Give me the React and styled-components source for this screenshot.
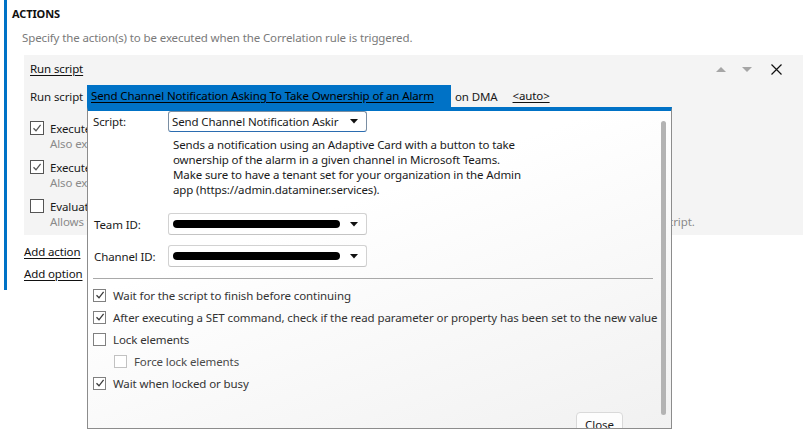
import React from "react";
import styled, { createGlobalStyle } from "styled-components";

const Global = createGlobalStyle`
  html, body { margin: 0; padding: 0; background: #ffffff; }
  body { font-family: "Noto Sans", "Open Sans", sans-serif; font-size: 11.5px; letter-spacing: -0.12px; color: #1a1a1a; overflow: hidden; }
  * { box-sizing: border-box; }
`;

const Page = styled.div`
  width: 803px;
  height: 434px;
  position: relative;
  overflow: hidden;
`;

const Section = styled.section`
  margin-left: 4px;
  border-left: 3px solid #0072c6;
  padding: 5px 0 7px 5px;
  display: flex;
  flex-direction: column;
  align-items: flex-start;
`;

const Title = styled.div`
  font-weight: 700;
  font-size: 11px;
  line-height: 18px;
  color: #111;
`;

const Hint = styled.div`
  margin: 6px 0 0 10px;
  line-height: 18px;
  color: #7a7a7a;
`;

const Card = styled.div`
  align-self: stretch;
  margin: 8px 0 0 12px;
  background: #f4f4f4;
  padding: 4px 11px 5px 6px;
  display: flex;
  flex-direction: column;
`;

const HeaderRow = styled.div`
  height: 20px;
  display: flex;
  align-items: center;
  justify-content: space-between;
`;

const Link = styled.a`
  color: #111;
  text-decoration: underline;
  text-underline-offset: 2px;
  cursor: pointer;
  line-height: 18px;
  margin-top: ${(p) => p.$mt || 0}px;
  margin-left: ${(p) => p.$ml || 0}px;
`;

const Controls = styled.div`
  display: flex;
  align-items: center;
`;

const IconBtn = styled.span`
  display: inline-flex;
  width: ${(p) => p.$w}px;
  justify-content: center;
  align-items: center;
`;

const ScriptRow = styled.div`
  margin-top: 6px;
  height: 22px;
  display: flex;
  align-items: center;
`;

const RowLabel = styled.span`
  width: 57px;
`;

const Selected = styled.div`
  position: relative;
  width: 364px;
  height: 22px;
  background: #0072c6;
  padding: 0 4px;
  display: flex;
  align-items: center;
  white-space: nowrap;
  a {
    color: #000;
  }
`;

const OnDma = styled.span`
  margin-left: 4px;
  margin-right: 15px;
`;

const Options = styled.div`
  margin-top: 13px;
  display: flex;
  flex-direction: column;
  gap: 7px;
`;

const OptionItem = styled.div`
  display: flex;
  flex-direction: column;
`;

const OptionTitle = styled.div`
  height: 16px;
  display: flex;
  align-items: center;
  gap: 6px;
  white-space: nowrap;
`;

const OptionDesc = styled.div`
  height: 16px;
  line-height: 16px;
  padding-left: 20px;
  color: #8a8a8a;
  white-space: nowrap;
`;

const Box = styled.span`
  width: ${(p) => p.$size}px;
  height: ${(p) => p.$size}px;
  flex: none;
  border: 1px solid ${(p) => p.$border};
  background: #fff;
  display: inline-flex;
  align-items: center;
  justify-content: center;
`;

const Popup = styled.div`
  position: absolute;
  left: 0;
  top: 100%;
  width: 585px;
  height: 322px;
  border: 1px solid #8c8c8c;
  border-top: 4px solid #0072c6;
  background: linear-gradient(160deg, #ffffff 35%, #f1f1f1 100%);
  padding: 0 18px 0 4px;
  overflow: hidden;
  z-index: 5;
  color: #1a1a1a;
`;

const Scrollbar = styled.div`
  position: absolute;
  right: 5px;
  top: 10px;
  bottom: 13px;
  width: 5px;
  border-radius: 3px;
  background: #b3b3b3;
`;

const FieldGrid = styled.div`
  display: grid;
  grid-template-columns: 76px 200px;
  align-items: center;
`;

const FieldLabel = styled.span`
  padding-left: ${(p) => p.$pl || 0}px;
  margin-top: ${(p) => p.$mt || 0}px;
`;

const Dropdown = styled.div`
  height: ${(p) => p.$h}px;
  margin-top: ${(p) => p.$mt || 0}px;
  width: ${(p) => p.$w}px;
  border: 1px solid ${(p) => (p.$focus ? "#7a8ea3" : "#d2d2d2")};
  border-bottom-color: ${(p) => (p.$focus ? "#2b6cb0" : "#c4c4c4")};
  border-radius: 3px;
  background: #fff;
  display: flex;
  align-items: center;
  padding: 0 8px 0 3px;
  gap: 6px;
  white-space: nowrap;
  overflow: hidden;
`;

const DropText = styled.span`
  flex: 1;
  overflow: hidden;
`;

const Redacted = styled.span`
  flex: 1;
  height: 8px;
  border-radius: 5px;
  background: #000;
  margin: 0 4px 0 1px;
`;

const Description = styled.div`
  grid-column: 2 / 3;
  margin: 5px 0 0 5px;
  line-height: 15px;
  white-space: nowrap;
`;

const Separator = styled.hr`
  margin: 11px 0 0 1px;
  border: none;
  border-top: 1px solid #a9a9a9;
`;

const Checks = styled.div`
  margin-top: 5px;
  display: flex;
  flex-direction: column;
`;

const CheckRow = styled.div`
  height: 22px;
  display: flex;
  align-items: center;
  gap: 7px;
  padding-left: ${(p) => (p.$indent ? 22 : 1)}px;
  color: ${(p) => (p.$muted ? "#4a4a4a" : "#333")};
  font-size: 11.5px;
  letter-spacing: -0.1px;
  white-space: nowrap;
`;

const Footer = styled.div`
  margin-top: 18px;
  display: flex;
  justify-content: flex-end;
  padding-right: 30px;
`;

const CloseButton = styled.button`
  width: 47px;
  height: 24px;
  border: 1px solid #d9d9d9;
  border-radius: 4px;
  background: #fdfdfd;
  font-family: inherit;
  font-size: 11.5px;
  color: #1a1a1a;
  padding: 0;
`;

const Check = ({ color = "#444" }) => (
  <svg width="10" height="10" viewBox="0 0 10 10">
    <path d="M1.5 5.2 L4 7.8 L8.6 1.8" fill="none" stroke={color} strokeWidth="1.3" />
  </svg>
);

const Caret = () => (
  <svg width="8" height="5" viewBox="0 0 8 5">
    <path d="M0 0 H8 L4 4.5 Z" fill="#111" />
  </svg>
);

const CardOption = ({ checked, title, desc }) => (
  <OptionItem>
    <OptionTitle>
      <Box $size={14} $border="#555">{checked && <Check color="#555" />}</Box>
      <span>{title}</span>
    </OptionTitle>
    <OptionDesc>{desc}</OptionDesc>
  </OptionItem>
);

const PopupCheck = ({ checked, label, indent, disabled }) => (
  <CheckRow $indent={indent} $muted={disabled}>
    <Box $size={13} $border={disabled ? "#c2c2c2" : "#808080"}>{checked && <Check color="#3a3a3a" />}</Box>
    <span>{label}</span>
  </CheckRow>
);

export default function App() {
  return (
    <Page>
      <Global />
      <Section>
        <Title>ACTIONS</Title>
        <Hint>Specify the action(s) to be executed when the Correlation rule is triggered.</Hint>
        <Card>
          <HeaderRow>
            <Link>Run script</Link>
            <Controls>
              <IconBtn $w={26}>
                <svg width="10" height="5" viewBox="0 0 10 5"><path d="M0 5 L5 0 L10 5 Z" fill="#a6a6a6" /></svg>
              </IconBtn>
              <IconBtn $w={26}>
                <svg width="10" height="5" viewBox="0 0 10 5"><path d="M0 0 L10 0 L5 5 Z" fill="#a6a6a6" /></svg>
              </IconBtn>
              <IconBtn $w={32}>
                <svg width="11" height="11" viewBox="0 0 11 11">
                  <path d="M0.5 0.5 L10.5 10.5 M10.5 0.5 L0.5 10.5" stroke="#111" strokeWidth="1.2" />
                </svg>
              </IconBtn>
            </Controls>
          </HeaderRow>
          <ScriptRow>
            <RowLabel>Run script</RowLabel>
            <Selected>
              <Link>Send Channel Notification Asking To Take Ownership of an Alarm</Link>
              <Popup>
                <Scrollbar />
                <FieldGrid>
                  <FieldLabel $pl={1}>Script:</FieldLabel>
                  <Dropdown $h={21} $w={199} $focus>
                    <DropText>Send Channel Notification Askir</DropText>
                    <Caret />
                  </Dropdown>
                  <Description>
                    Sends a notification using an Adaptive Card with a button to take
                    <br />
                    ownership of the alarm in a given channel in Microsoft Teams.
                    <br />
                    Make sure to have a tenant set for your organization in the Admin
                    <br />
                    app (https://admin.dataminer.services).
                  </Description>
                  <FieldLabel $pl={2} $mt={16}>Team ID:</FieldLabel>
                  <Dropdown $h={22} $w={199} $mt={16}>
                    <Redacted />
                    <Caret />
                  </Dropdown>
                  <FieldLabel $pl={2} $mt={10}>Channel ID:</FieldLabel>
                  <Dropdown $h={22} $w={199} $mt={10}>
                    <Redacted />
                    <Caret />
                  </Dropdown>
                </FieldGrid>
                <Separator />
                <Checks>
                  <PopupCheck checked label="Wait for the script to finish before continuing" />
                  <PopupCheck checked label="After executing a SET command, check if the read parameter or property has been set to the new value" />
                  <PopupCheck label="Lock elements" />
                  <PopupCheck indent disabled label="Force lock elements" />
                  <PopupCheck checked label="Wait when locked or busy" />
                </Checks>
                <Footer>
                  <CloseButton>Close</CloseButton>
                </Footer>
              </Popup>
            </Selected>
            <OnDma>on DMA</OnDma>
            <Link>&lt;auto&gt;</Link>
          </ScriptRow>
          <Options>
            <CardOption checked title="Execute the script only once per alarm" desc="Also execute the script when the alarm is updated." />
            <CardOption checked title="Execute the script when the alarm is cleared" desc="Also execute the script when the alarm is cleared." />
            <CardOption
              title="Evaluate the rule again after the script"
              desc="Allows the conditions of this Correlation rule to be re-evaluated, taking into account the changes made by this same script."
            />
          </Options>
        </Card>
        <Link $mt={8} $ml={12}>Add action</Link>
        <Link $mt={4} $ml={12}>Add option</Link>
      </Section>
    </Page>
  );
}
